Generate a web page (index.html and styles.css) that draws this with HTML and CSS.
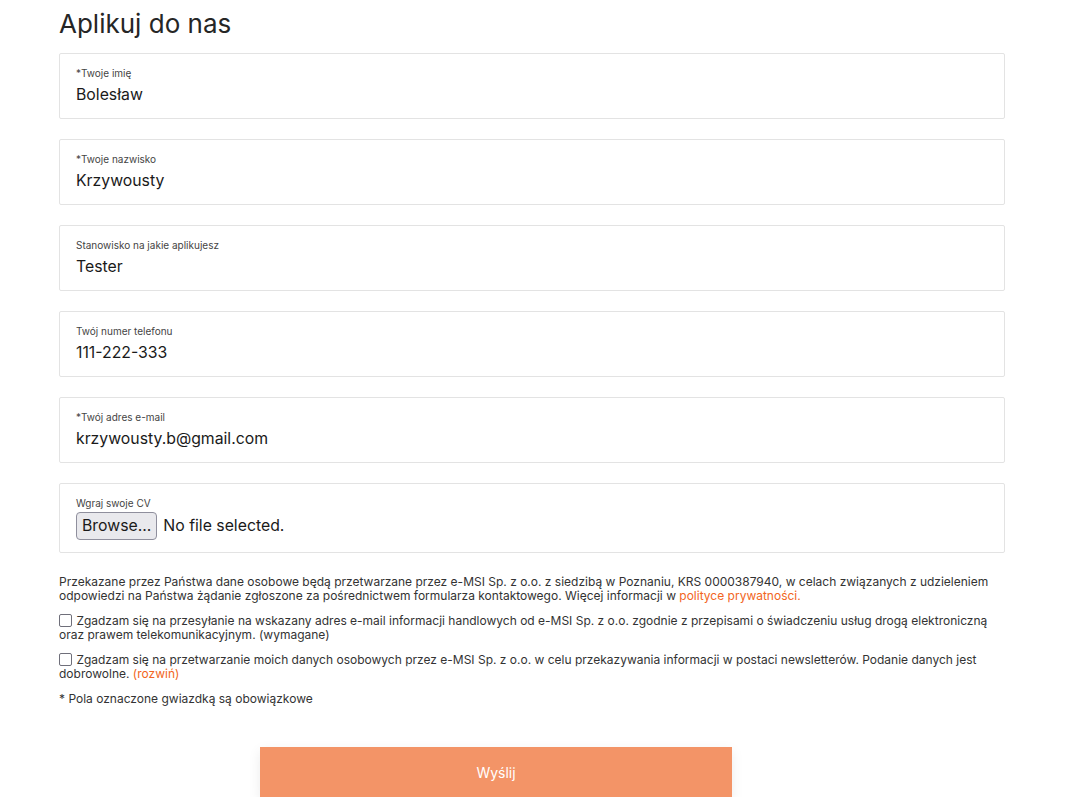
FILE: index.html
```html
<!DOCTYPE html>
<html lang="pl">
<head>
<meta charset="utf-8">
<title>Aplikuj do nas</title>
<link rel="stylesheet" href="styles.css">
</head>
<body>
<main class="page">
  <h1 class="title">Aplikuj do nas</h1>
  <form class="form">
    <div class="field"><span class="label">*Twoje imię</span><span class="value">Bolesław</span></div>
    <div class="field"><span class="label">*Twoje nazwisko</span><span class="value">Krzywousty</span></div>
    <div class="field"><span class="label">Stanowisko na jakie aplikujesz</span><span class="value">Tester</span></div>
    <div class="field"><span class="label">Twój numer telefonu</span><span class="value">111-222-333</span></div>
    <div class="field"><span class="label">*Twój adres e-mail</span><span class="value">krzywousty.b@gmail.com</span></div>
    <div class="field field-file"><span class="label">Wgraj swoje CV</span>
      <div class="file-row"><span class="browse">Browse...</span><span class="value">No file selected.</span></div>
    </div>
    <p class="info">Przekazane przez Państwa dane osobowe będą przetwarzane przez e-MSI Sp. z o.o. z siedzibą w Poznaniu, KRS 0000387940, w celach związanych z udzieleniem odpowiedzi na Państwa żądanie zgłoszone za pośrednictwem formularza kontaktowego. Więcej informacji w <a class="link">polityce prywatności.</a></p>
    <p class="info"><span class="check"></span> Zgadzam się na przesyłanie na wskazany adres e-mail informacji handlowych od e-MSI Sp. z o.o. zgodnie z przepisami o świadczeniu usług drogą elektroniczną oraz prawem telekomunikacyjnym. (wymagane)</p>
    <p class="info"><span class="check"></span> Zgadzam się na przetwarzanie moich danych osobowych przez e-MSI Sp. z o.o. w celu przekazywania informacji w postaci newsletterów. Podanie danych jest dobrowolne. <a class="link">(rozwiń)</a></p>
    <p class="info">* Pola oznaczone gwiazdką są obowiązkowe</p>
    <div class="submit-row"><span class="submit">Wyślij</span></div>
  </form>
</main>
</body>
</html>
```
FILE: styles.css
```css
* { box-sizing: border-box; }
html, body { margin: 0; padding: 0; background: #fff; }
body { font-family: Inter, "Noto Sans", sans-serif; color: #222; }
.page { width: 946px; margin-left: 59px; padding-top: 8px; }
.title { font-size: 26px; font-weight: 400; margin: 0 0 13px 0; line-height: 32px; color: #262626; }
.form { display: flex; flex-direction: column; }
.field { border: 1px solid #e3e3e3; border-radius: 2px; padding: 13px 16px 0 16px; height: 66px; margin-bottom: 20px; display: flex; flex-direction: column; }
.label { font-size: 10px; line-height: 12px; color: #444; }
.value { font-size: 15.8px; line-height: 20px; margin-top: 6px; color: #1a1a1a; }
.field-file { height: 70px; margin-bottom: 22px; }
.file-row { display: flex; align-items: center; margin-top: 3px; }
.file-row .value { margin-top: 0; margin-left: 6px; }
.browse { font-size: 15.8px; line-height: 20px; padding: 3px 5px; background: #e9e9ed; border: 1px solid #8f8f9d; border-radius: 4px; color: #1a1a1a; }
.info { font-size: 12px; line-height: 14px; color: #333; margin: 0 0 11px 0; }
.check { display: inline-block; width: 13px; height: 13px; border: 1.5px solid #6f6f7a; border-radius: 2px; vertical-align: -2px; margin-right: 1px; }
.link { color: #f26522; display: inline-block; line-height: 14px; }
.submit-row { margin-top: 30px; padding-left: 201px; }
.submit { display: flex; align-items: center; justify-content: center; width: 472px; height: 50px; background: #f39467; color: #fff; font-size: 14px; box-shadow: 0 4px 12px rgba(0,0,0,0.08); }
```
